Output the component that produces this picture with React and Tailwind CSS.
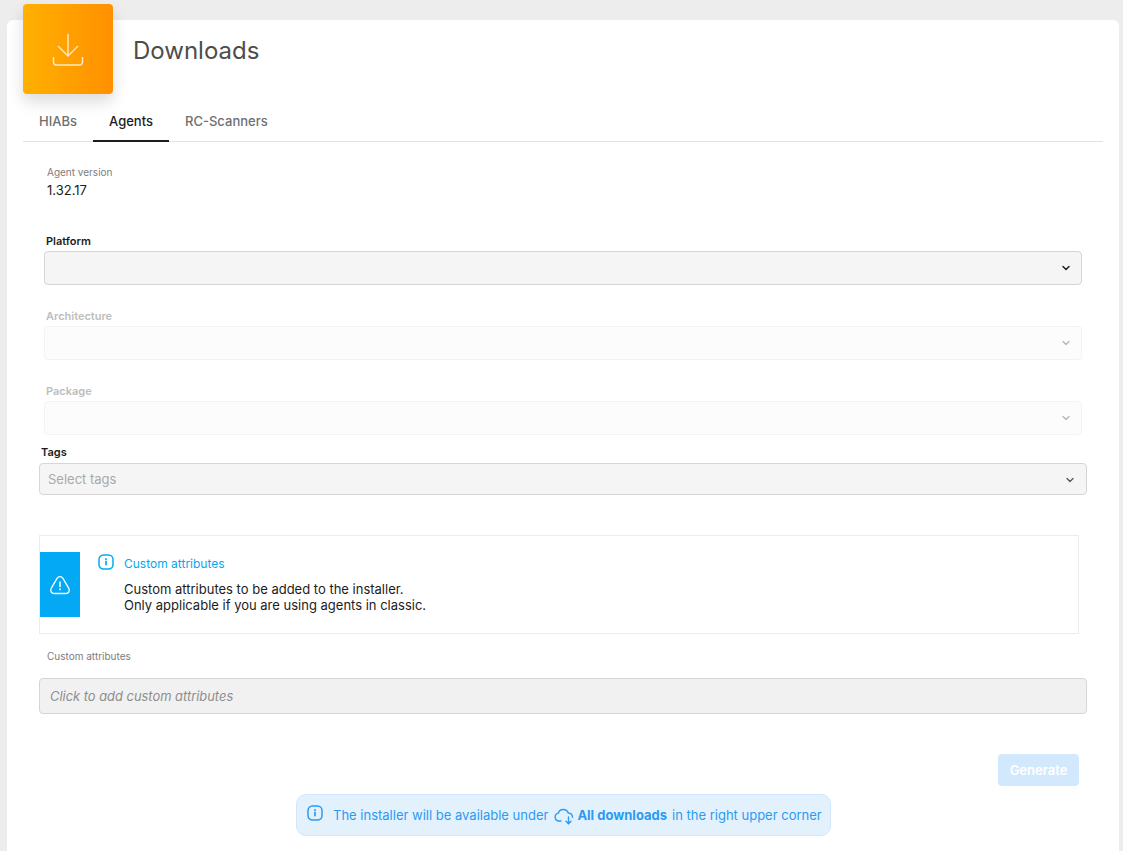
import { ChevronDown } from "lucide-react";

function InfoIcon({ className }) {
  return (
    <svg viewBox="0 0 16 16" fill="none" stroke="currentColor" className={className}>
      <rect x="1" y="1" width="14" height="14" rx="4.5" strokeWidth="1.5" />
      <path d="M8 7.4v3.2" strokeWidth="1.7" strokeLinecap="round" />
      <path d="M8 4.9v.3" strokeWidth="1.8" strokeLinecap="round" />
    </svg>
  );
}

function SelectField({ label, disabled, mt }) {
  return (
    <div className={`ml-[21px] w-[1038px] ${mt}`}>
      <div
        className={`h-[14px] pl-[2px] text-[11px] leading-[14px] font-semibold ${
          disabled ? "text-[#bdbdbd]" : "text-[#1c1c1c]"
        }`}
      >
        {label}
      </div>
      <div
        className={`mt-[3px] h-[34px] flex items-center justify-end pr-[9px] rounded border ${
          disabled ? "bg-[#fcfcfc] border-[#f3f3f3] text-[#b5b5b5]" : "bg-[#f5f5f5] border-[#d6d6d6] text-[#222]"
        }`}
      >
        <ChevronDown size={12} strokeWidth={disabled ? 2.5 : 3} />
      </div>
    </div>
  );
}

export default function App() {
  return (
    <div className="h-[851px] overflow-hidden bg-[#ededed] pt-[20px] pl-[7px] font-['Inter',sans-serif] antialiased">
      <div className="flow-root w-[1112px] h-[900px] bg-white rounded-md px-4">
        <div className="flex -mt-4">
          <div className="w-[90px] h-[90px] rounded bg-gradient-to-r from-[#ffb000] to-[#ff9000] shadow-[0_8px_16px_rgba(0,0,0,0.14)] flex items-center justify-center">
            <svg viewBox="0 0 32 34" fill="none" stroke="#ffe9c2" strokeWidth="1.4" className="w-[32px] h-[34px]">
              <path d="M16 2v22M6 14l10 10 10-10" />
              <path d="M1.5 25v5a3 3 0 0 0 3 3h23a3 3 0 0 0 3-3v-5" />
            </svg>
          </div>
          <div className="ml-5 mt-[30px] h-[34px] text-[24px] leading-[34px] text-[#4d4d4d]">Downloads</div>
        </div>

        <div className="mt-2 h-[40px] flex border-b border-[#e2e2e2] text-[13px] font-medium">
          <div className="w-[70px] pt-[10px] pl-4 text-[#6f6f6f]">HIABs</div>
          <div className="w-[76px] pt-[10px] text-center text-[#1c1c1c] border-b-2 border-[#1c1c1c] h-[40px]">Agents</div>
          <div className="pt-[10px] pl-4 text-[#6f6f6f]">RC-Scanners</div>
        </div>

        <div className="ml-6 mt-[23px] text-[10px] leading-[14px] text-[#7d7d7d]">Agent version</div>
        <div className="ml-6 mt-[2px] text-[13px] leading-[18px] text-[#1c1c1c]">1.32.17</div>

        <SelectField label="Platform" mt="mt-[35px]" />
        <SelectField label="Architecture" disabled mt="mt-[24px]" />
        <SelectField label="Package" disabled mt="mt-[24px]" />

        <div className="ml-4 w-[1048px] mt-[10px]">
          <div className="h-[14px] pl-[2px] text-[11px] leading-[14px] font-semibold text-[#1c1c1c]">Tags</div>
          <div className="mt-[4px] h-[32px] flex items-center justify-between pt-[2px] pl-2 pr-[10px] rounded border border-[#d6d6d6] bg-[#f5f5f5] text-[13px] text-[#a9a9a9]">
            Select tags
            <ChevronDown size={12} strokeWidth={2.6} className="text-[#555]" />
          </div>
        </div>

        <div className="ml-4 mt-[40px] w-[1040px] h-[99px] border border-[#ececec] pt-4 flex">
          <div className="w-[40px] h-[65px] bg-[#03a9f4] flex items-center justify-center text-white">
            <svg viewBox="0 0 22 20" fill="none" stroke="currentColor" className="w-[22px] h-[20px]">
              <path d="M8.2 3.2 2.2 13.4C.9 15.8 2.4 18.5 5 18.5h12c2.6 0 4.1-2.7 2.8-5.1l-6-10.2c-1.2-2.2-4.4-2.2-5.6 0Z" strokeWidth="1.3" />
              <path d="M11 7v4.5" strokeWidth="1.5" strokeLinecap="round" />
              <path d="M11 14.2v.2" strokeWidth="1.7" strokeLinecap="round" />
            </svg>
          </div>
          <div className="ml-[18px]">
            <div className="flex items-start h-[20px]">
              <InfoIcon className="mt-[2px] w-[16px] h-[16px] text-[#03a9f4]" />
              <span className="ml-[10px] mt-[3px] text-[12px] leading-[18px] text-[#03a9f4]">Custom attributes</span>
            </div>
            <div className="ml-[26px] mt-[9px] text-[13px] leading-[16px] text-[#1c1c1c]">
              Custom attributes to be added to the installer.
              <br />
              Only applicable if you are using agents in classic.
            </div>
          </div>
        </div>

        <div className="ml-6 mt-[15px] text-[10px] leading-[14px] text-[#7d7d7d]">Custom attributes</div>
        <div className="ml-4 mt-[15px] w-[1048px] h-[36px] flex items-center pt-[2px] pl-[10px] rounded border border-[#d6d6d6] bg-[#f1f1f1] text-[12.9px] italic text-[#8e8e8e]">
          Click to add custom attributes
        </div>

        <div className="ml-4 w-[1040px] mt-[40px] flex justify-end">
          <button className="w-[81px] h-[32px] pt-[2px] rounded bg-[#d2e9fd] text-white text-[13px] font-semibold">Generate</button>
        </div>

        <div className="mt-2 ml-[273px] w-[535px] h-[42px] flex items-center pt-[2px] pl-[10px] rounded-[10px] border border-[#cfe6fb] bg-[#e3f1fd] text-[13px] text-[#2b9af3]">
          <InfoIcon className="w-[16px] h-[16px] mr-[10px] -mt-[6px]" />
          The installer will be available under
          <svg viewBox="0 0 20 18" fill="none" stroke="currentColor" strokeWidth="1.4" className="ml-[6px] mr-[3px] w-[20px] h-[18px]">
            <path d="M7 14H5a4 4 0 0 1-.7-7.9A5.3 5.3 0 0 1 14.3 6c2.6.2 4.2 2 4.2 4.2" strokeLinecap="round" />
            <path d="M14.5 10v6.5M12 14.2l2.5 2.5 2.5-2.5" strokeLinecap="round" />
          </svg>
          <span className="font-bold">All downloads</span>
          <span className="ml-[5px]">in the right upper corner</span>
        </div>
      </div>
    </div>
  );
}
